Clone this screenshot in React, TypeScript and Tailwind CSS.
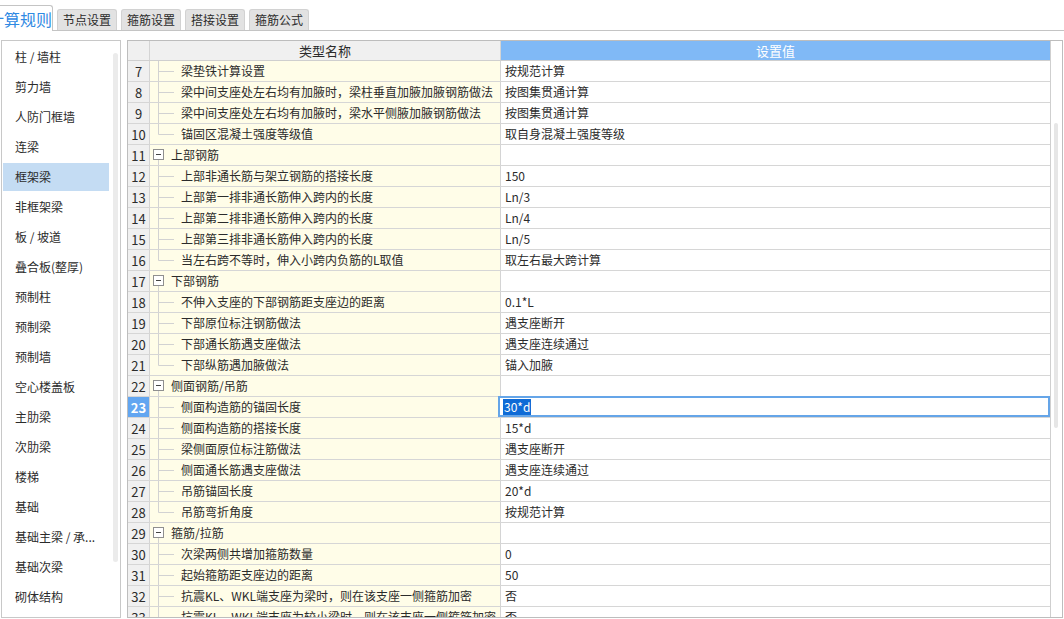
import React from "react";

type Row = {
  no: number;
  name: string;
  value?: string;
  group?: boolean;
  last?: boolean;
  selected?: boolean;
};

const rows: Row[] = [
  { no: 7, name: "梁垫铁计算设置", value: "按规范计算" },
  { no: 8, name: "梁中间支座处左右均有加腋时，梁柱垂直加腋加腋钢筋做法", value: "按图集贯通计算" },
  { no: 9, name: "梁中间支座处左右均有加腋时，梁水平侧腋加腋钢筋做法", value: "按图集贯通计算" },
  { no: 10, name: "锚固区混凝土强度等级值", value: "取自身混凝土强度等级", last: true },
  { no: 11, name: "上部钢筋", group: true },
  { no: 12, name: "上部非通长筋与架立钢筋的搭接长度", value: "150" },
  { no: 13, name: "上部第一排非通长筋伸入跨内的长度", value: "Ln/3" },
  { no: 14, name: "上部第二排非通长筋伸入跨内的长度", value: "Ln/4" },
  { no: 15, name: "上部第三排非通长筋伸入跨内的长度", value: "Ln/5" },
  { no: 16, name: "当左右跨不等时，伸入小跨内负筋的L取值", value: "取左右最大跨计算", last: true },
  { no: 17, name: "下部钢筋", group: true },
  { no: 18, name: "不伸入支座的下部钢筋距支座边的距离", value: "0.1*L" },
  { no: 19, name: "下部原位标注钢筋做法", value: "遇支座断开" },
  { no: 20, name: "下部通长筋遇支座做法", value: "遇支座连续通过" },
  { no: 21, name: "下部纵筋遇加腋做法", value: "锚入加腋", last: true },
  { no: 22, name: "侧面钢筋/吊筋", group: true },
  { no: 23, name: "侧面构造筋的锚固长度", value: "30*d", selected: true },
  { no: 24, name: "侧面构造筋的搭接长度", value: "15*d" },
  { no: 25, name: "梁侧面原位标注筋做法", value: "遇支座断开" },
  { no: 26, name: "侧面通长筋遇支座做法", value: "遇支座连续通过" },
  { no: 27, name: "吊筋锚固长度", value: "20*d" },
  { no: 28, name: "吊筋弯折角度", value: "按规范计算", last: true },
  { no: 29, name: "箍筋/拉筋", group: true },
  { no: 30, name: "次梁两侧共增加箍筋数量", value: "0" },
  { no: 31, name: "起始箍筋距支座边的距离", value: "50" },
  { no: 32, name: "抗震KL、WKL端支座为梁时，则在该支座一侧箍筋加密", value: "否" },
  { no: 33, name: "抗震KL、WKL端支座为较小梁时，则在该支座一侧箍筋加密", value: "否" },
];

const sideItems = [
  "柱 / 墙柱",
  "剪力墙",
  "人防门框墙",
  "连梁",
  "框架梁",
  "非框架梁",
  "板 / 坡道",
  "叠合板(整厚)",
  "预制柱",
  "预制梁",
  "预制墙",
  "空心楼盖板",
  "主肋梁",
  "次肋梁",
  "楼梯",
  "基础",
  "基础主梁 / 承...",
  "基础次梁",
  "砌体结构",
];

const tabs = ["节点设置", "箍筋设置", "搭接设置", "箍筋公式"];

function TreeGuide({ group, last }: { group?: boolean; last?: boolean }) {
  if (group) {
    return (
      <svg width="21" height="20" className="shrink-0">
        <line x1="8.5" y1="15" x2="8.5" y2="20" stroke="#d2d2d2" />
        <rect x="3.5" y="4.5" width="10" height="10" fill="#fff" stroke="#8f8f8f" />
        <line x1="6" y1="9.5" x2="11" y2="9.5" stroke="#444" />
      </svg>
    );
  }
  return (
    <svg width="31" height="20" className="shrink-0">
      <line x1="8.5" y1="0" x2="8.5" y2={last ? 10.5 : 20} stroke="#d2d2d2" />
      <line x1="8.5" y1="10.5" x2="24" y2="10.5" stroke="#d2d2d2" />
    </svg>
  );
}

export default function App() {
  return (
    <div className="w-[1064px] h-[619px] overflow-hidden bg-white text-[12px] text-[#2b2b2b] font-['Noto_Sans_CJK_SC',sans-serif]">
      {/* tab strip */}
      <div className="h-[31px] flex items-end border-b border-[#c4c4c4]">
        <div className="-ml-[14px] -mb-px w-[67px] h-[26px] bg-white border border-b-0 border-[#c4c4c4] rounded-tr-[3px] flex items-center justify-end text-[16px] leading-none text-[#2f8ae3] whitespace-nowrap overflow-hidden">
          计算规则
        </div>
        {tabs.map((t) => (
          <div
            key={t}
            className="ml-[4px] w-[60px] h-[21px] bg-[#e2e2e2] border border-b-0 border-[#d2d2d2] rounded-t-[3px] flex items-center justify-center leading-none"
          >
            {t}
          </div>
        ))}
      </div>

      <div className="flex pt-[9px] gap-[6px]">
        {/* left category list */}
        <div className="ml-[1px] w-[120px] h-[578px] border border-[#c8c8c8] flex overflow-hidden">
          <div className="w-[107px] pl-[1px] pt-[2px]">
            {sideItems.map((s, i) => (
              <div
                key={s}
                className={`h-[28px] mb-[2px] pl-[12px] flex items-center whitespace-nowrap leading-none ${
                  i === 4 ? "bg-[#c4dcf3]" : ""
                }`}
              >
                {s}
              </div>
            ))}
          </div>
          <div className="ml-[4px] mt-[12px] w-[5px] h-[509px] rounded-full bg-[#ebebeb]" />
        </div>

        {/* settings grid */}
        <div className="w-[936px] h-[578px] border border-[#bdbdbd] flex overflow-hidden">
          <div className="flex-1 flex flex-col overflow-hidden">
            <div className="flex h-[20px] shrink-0 border-b border-[#cfcfcf]">
              <div className="w-[22px] bg-[#f0f0f0] border-r border-[#d4d4d4]" />
              <div className="w-[351px] bg-[#f0f0f0] border-r border-[#d4d4d4] flex items-center justify-center text-[13px] leading-none">
                类型名称
              </div>
              <div className="flex-1 bg-[#80b9f6] flex items-center justify-center text-[13px] leading-none text-white">
                设置值
              </div>
            </div>
            {rows.map((r) => (
              <div key={r.no} className="flex h-[21px] shrink-0 border-b border-[#d6d6d6]">
                <div
                  className={`w-[22px] border-r border-[#d4d4d4] flex items-center justify-center text-[13px] leading-none ${
                    r.selected ? "bg-[#62a6f1] text-white font-bold" : "bg-[#f0f0f0]"
                  }`}
                >
                  {r.no}
                </div>
                <div className="w-[351px] bg-[#fffde8] border-r border-[#d4d4d4] flex items-center whitespace-nowrap overflow-hidden leading-none">
                  <TreeGuide group={r.group} last={r.last} />
                  <span>{r.name}</span>
                </div>
                <div className="relative flex-1 flex items-center pl-[4px] leading-none">
                  {r.selected ? (
                    <div className="absolute -left-[3px] -top-[1px] right-0 bottom-0 border-2 border-[#65a5e8] bg-white flex items-center pl-[3px]">
                      <span className="bg-[#0f6bd6] text-white px-[1px] py-[2px] leading-none">{r.value}</span>
                    </div>
                  ) : (
                    r.value
                  )}
                </div>
              </div>
            ))}
          </div>
          <div className="w-[12px] border-l border-[#cfcfcf] pt-[82px] pl-[3px]">
            <div className="w-[4px] h-[305px] rounded-full bg-[#e6e6e6]" />
          </div>
        </div>
      </div>
    </div>
  );
}
